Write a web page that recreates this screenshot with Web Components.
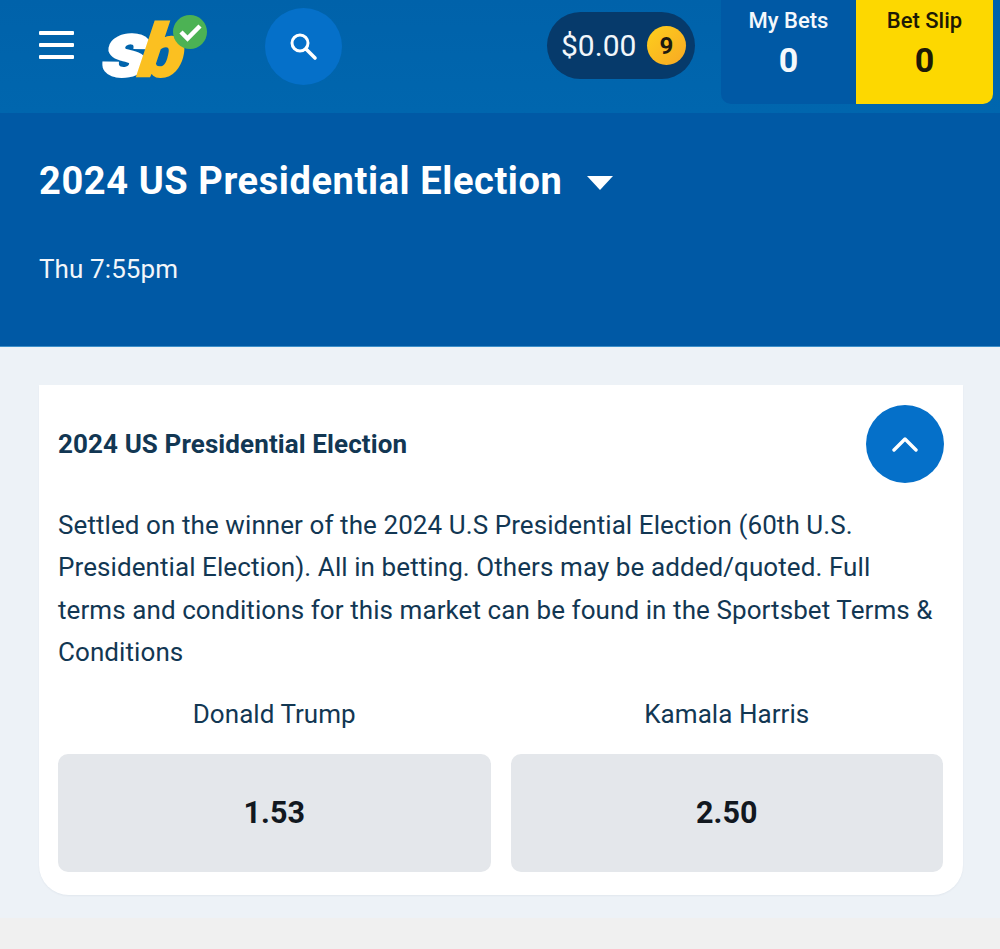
<!DOCTYPE html>
<html lang="en">
<head>
<meta charset="utf-8">
<title>2024 US Presidential Election</title>
<style>
  html, body { margin: 0; padding: 0; background: #f0f0f0; }
  body { font-family: Roboto, "Liberation Sans", sans-serif; color: #123753; }
</style>
</head>
<body>
<site-header></site-header>
<event-banner heading="2024 US Presidential Election" time="Thu 7:55pm"></event-banner>
<market-section>
  <market-card heading="2024 US Presidential Election">
    Settled on the winner of the 2024 U.S Presidential Election (60th U.S. Presidential Election). All in betting. Others may be added/quoted. Full terms and conditions for this market can be found in the Sportsbet Terms &amp; Conditions
    <odds-option slot="options" name="Donald Trump" price="1.53"></odds-option>
    <odds-option slot="options" name="Kamala Harris" price="2.50"></odds-option>
  </market-card>
</market-section>

<script>
class SiteHeader extends HTMLElement {
  constructor() {
    super();
    this.attachShadow({ mode: 'open' }).innerHTML = `
      <style>
        :host {
          display: flex;
          align-items: flex-start;
          height: 113px;
          padding-left: 39px;
          padding-right: 7px;
          box-sizing: border-box;
          background: linear-gradient(#0062aa, #0066ae);
          color: #fff;
        }
        .burger { display: flex; flex-direction: column; gap: 8px; width: 35px; margin-top: 31px; }
        .burger span { display: block; height: 4px; background: #fff; border-radius: 1px; }
        .logo { display: block; margin: 14px 0 0 27px; width: 107px; height: 66px; overflow: visible; }
        .logo text { font-family: Roboto, sans-serif; font-weight: 900; font-style: italic; font-size: 74px; }
        .search {
          width: 77px; height: 77px; margin: 8px 0 0 57px; border-radius: 50%;
          background: #0570c9; display: flex; align-items: center; justify-content: center;
        }
        .balance {
          margin: 12px 0 0 auto; height: 67px; width: 148px; box-sizing: border-box;
          padding: 0 9px 0 14px; border-radius: 34px; background: #063a6b;
          display: flex; align-items: center; justify-content: space-between;
          font-size: 30px; color: #f2f6fa;
        }
        .badge {
          width: 39px; height: 39px; border-radius: 50%;
          background: linear-gradient(135deg, #fdcf1c, #f8a824);
          color: #1c1a10; font-size: 24px; font-weight: 700;
          display: flex; align-items: center; justify-content: center;
        }
        .tabs { display: flex; margin-left: 26px; height: 104px; border-radius: 0 0 10px 10px; overflow: hidden; }
        .tab {
          display: flex; flex-direction: column; align-items: center; padding-top: 8px; box-sizing: border-box;
          font-size: 22px; font-weight: 500; line-height: 26px;
        }
        .tab b { font-size: 34px; font-weight: 700; line-height: 40px; margin-top: 6px; }
        .bets { width: 135px; background: #0059a5; color: #f4f8fc; }
        .slip { width: 137px; background: #fdd800; color: #1d1a05; }
      </style>
      <div class="burger"><span></span><span></span><span></span></div>
      <svg class="logo" viewBox="0 0 107 66" aria-label="sb">
        <text transform="translate(2 62) skewX(-6) scale(1.22 1.04)" fill="#fff" stroke="#fff" stroke-width="2.5">s</text>
        <text transform="translate(37 62) skewX(-8) scale(1.08 .98)" fill="#fbc021" stroke="#fbc021" stroke-width="2.5">b</text>
        <circle cx="89" cy="18" r="17" fill="#4cb254"/>
        <path d="M80 18l6.5 6.5L99 12" fill="none" stroke="#fff" stroke-width="4.5"/>
      </svg>
      <div class="search">
        <svg width="30" height="30" viewBox="0 0 30 30" fill="none" stroke="#fff">
          <circle cx="11" cy="11" r="8" stroke-width="3"/>
          <path d="M17 17l9 9" stroke-width="3.6" stroke-linecap="round"/>
        </svg>
      </div>
      <div class="balance"><span>$0.00</span><span class="badge">9</span></div>
      <div class="tabs">
        <div class="tab bets">My Bets<b>0</b></div>
        <div class="tab slip">Bet Slip<b>0</b></div>
      </div>`;
  }
}

class EventBanner extends HTMLElement {
  connectedCallback() {
    this.attachShadow({ mode: 'open' }).innerHTML = `
      <style>
        :host {
          display: block; height: 234px; box-sizing: border-box;
          padding: 42px 39px 0;
          background: #0059a5; color: #fff;
          border-bottom: 1px solid #3d8fc9;
        }
        .title { display: flex; align-items: center; gap: 25px; height: 52px; }
        h1 { margin: 0; font-size: 38px; font-weight: 700; line-height: 52px; letter-spacing: .6px; }
        .caret { width: 0; height: 0; margin-top: 3px; border: 13px solid transparent; border-top: 14px solid #fff; border-bottom: 0; }
        p { margin: 45px 0 0; font-size: 26px; line-height: 34px; letter-spacing: .1px; color: #f2f6fa; }
      </style>
      <div class="title"><h1>${this.getAttribute('heading')}</h1><span class="caret"></span></div>
      <p>${this.getAttribute('time')}</p>`;
  }
}

class MarketSection extends HTMLElement {
  constructor() {
    super();
    this.attachShadow({ mode: 'open' }).innerHTML = `
      <style>
        :host {
          display: block; box-sizing: border-box; height: 571px;
          padding: 38px 37px 0 39px; background: #edf2f7;
        }
      </style>
      <slot></slot>`;
  }
}

class MarketCard extends HTMLElement {
  connectedCallback() {
    this.attachShadow({ mode: 'open' }).innerHTML = `
      <style>
        :host {
          display: block; height: 510px; box-sizing: border-box;
          padding: 20px 20px 23px 19px;
          background: #fff; border-radius: 0 0 30px 30px;
          color: #123753;
          box-shadow: 0 1px 2px rgba(14, 49, 80, .05);
        }
        .head { display: flex; align-items: center; justify-content: space-between; height: 78px; }
        h2 { margin: 0; font-size: 26px; font-weight: 700; letter-spacing: .1px; }
        .toggle {
          width: 78px; height: 78px; margin-right: -1px; border-radius: 50%; background: #0570c9;
          display: flex; align-items: center; justify-content: center;
        }
        .text { margin-top: 21px; font-size: 26px; line-height: 42.4px; letter-spacing: .08px; }
        .options { display: grid; grid-template-columns: 1fr 1fr; gap: 20px; margin-top: 21px; }
      </style>
      <div class="head">
        <h2>${this.getAttribute('heading')}</h2>
        <div class="toggle">
          <svg width="26" height="16" viewBox="0 0 26 16" fill="none" stroke="#fff" stroke-width="3.4" stroke-linecap="round" stroke-linejoin="round"><path d="M2 14L13 3l11 11"/></svg>
        </div>
      </div>
      <div class="text"><slot></slot></div>
      <div class="options"><slot name="options"></slot></div>`;
  }
}

class OddsOption extends HTMLElement {
  connectedCallback() {
    this.attachShadow({ mode: 'open' }).innerHTML = `
      <style>
        :host { display: block; text-align: center; color: #123753; }
        .name { font-size: 26px; line-height: 38px; margin-bottom: 21px; letter-spacing: .05px; }
        .price {
          height: 118px; border-radius: 10px; background: #e4e7eb; color: #12181f;
          display: flex; align-items: center; justify-content: center;
          font-size: 30.5px; font-weight: 700;
        }
      </style>
      <div class="name">${this.getAttribute('name')}</div>
      <div class="price">${this.getAttribute('price')}</div>`;
  }
}

customElements.define('site-header', SiteHeader);
customElements.define('event-banner', EventBanner);
customElements.define('market-section', MarketSection);
customElements.define('market-card', MarketCard);
customElements.define('odds-option', OddsOption);
</script>
</body>
</html>
